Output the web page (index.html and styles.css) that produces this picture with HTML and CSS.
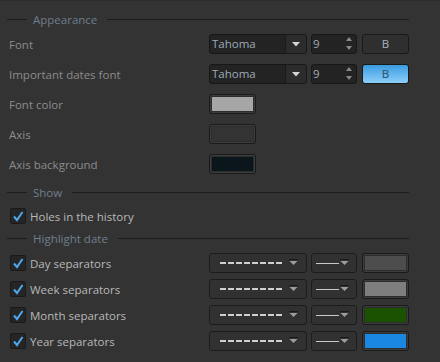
FILE: index.html
```html
<!DOCTYPE html>
<html lang="en">
<head>
    <meta charset="UTF-8">
    <title>Settings</title>
    <link rel="stylesheet" href="styles.css">
</head>
<body>

<div class="panel">
    <div class="group-title first">Appearance</div>

    <div class="rows appearance">
        <div class="row">
            <div class="label">Font</div>
            <div class="combo">
                <span class="combo-text">Tahoma</span>
                <span class="combo-btn"><svg width="8" height="5" viewBox="0 0 8 5"><path d="M0 0H8L4 4.5Z" fill="#d4d4d4"/></svg></span>
            </div>
            <div class="spin">
                <span class="spin-text">9</span>
                <span class="spin-arrows">
                    <svg width="6" height="4" viewBox="0 0 6 4"><path d="M0 4H6L3 0Z" fill="#8a8a8a"/></svg>
                    <svg width="6" height="4" viewBox="0 0 6 4"><path d="M0 0H6L3 4Z" fill="#8a8a8a"/></svg>
                </span>
            </div>
            <div class="btn">B</div>
        </div>

        <div class="row">
            <div class="label">Important dates font</div>
            <div class="combo">
                <span class="combo-text">Tahoma</span>
                <span class="combo-btn"><svg width="8" height="5" viewBox="0 0 8 5"><path d="M0 0H8L4 4.5Z" fill="#d4d4d4"/></svg></span>
            </div>
            <div class="spin">
                <span class="spin-text">9</span>
                <span class="spin-arrows">
                    <svg width="6" height="4" viewBox="0 0 6 4"><path d="M0 4H6L3 0Z" fill="#8a8a8a"/></svg>
                    <svg width="6" height="4" viewBox="0 0 6 4"><path d="M0 0H6L3 4Z" fill="#8a8a8a"/></svg>
                </span>
            </div>
            <div class="btn btn-on">B</div>
        </div>

        <div class="row">
            <div class="label">Font color</div>
            <div class="swatch"><span style="background:#a6a6a6"></span></div>
        </div>

        <div class="row">
            <div class="label">Axis</div>
            <div class="swatch"><span style="background:#333333"></span></div>
        </div>

        <div class="row">
            <div class="label">Axis background</div>
            <div class="swatch"><span style="background:#0b161c"></span></div>
        </div>
    </div>

    <div class="group-title show">Show</div>

    <div class="check-row holes">
        <span class="check"><svg width="14" height="14" viewBox="0 0 14 14"><path d="M3 7.5L6 11L11.5 3" fill="none" stroke="#4ea8ee" stroke-width="2"/></svg></span>
        <span class="check-text">Holes in the history</span>
    </div>

    <div class="group-title highlight">Highlight date</div>

    <div class="rows separators">
        <div class="row">
            <div class="check-row">
                <span class="check"><svg width="14" height="14" viewBox="0 0 14 14"><path d="M3 7.5L6 11L11.5 3" fill="none" stroke="#4ea8ee" stroke-width="2"/></svg></span>
                <span class="check-text">Day separators</span>
            </div>
            <div class="dash-combo"><span class="dashes"></span><svg class="arrow" width="9" height="7" viewBox="0 0 9 7"><path d="M0 0.5H9" stroke="#1a1a1a"/><path d="M0.5 2H8.5L4.5 6Z" fill="#9c9c9c"/></svg></div>
            <div class="line-combo"><span class="solid"></span><svg class="arrow" width="9" height="7" viewBox="0 0 9 7"><path d="M0 0.5H9" stroke="#1a1a1a"/><path d="M0.5 2H8.5L4.5 6Z" fill="#9c9c9c"/></svg></div>
            <div class="swatch"><span style="background:#4d4d4d"></span></div>
        </div>

        <div class="row">
            <div class="check-row">
                <span class="check"><svg width="14" height="14" viewBox="0 0 14 14"><path d="M3 7.5L6 11L11.5 3" fill="none" stroke="#4ea8ee" stroke-width="2"/></svg></span>
                <span class="check-text">Week separators</span>
            </div>
            <div class="dash-combo"><span class="dashes"></span><svg class="arrow" width="9" height="7" viewBox="0 0 9 7"><path d="M0 0.5H9" stroke="#1a1a1a"/><path d="M0.5 2H8.5L4.5 6Z" fill="#9c9c9c"/></svg></div>
            <div class="line-combo"><span class="solid"></span><svg class="arrow" width="9" height="7" viewBox="0 0 9 7"><path d="M0 0.5H9" stroke="#1a1a1a"/><path d="M0.5 2H8.5L4.5 6Z" fill="#9c9c9c"/></svg></div>
            <div class="swatch"><span style="background:#7e7e7e"></span></div>
        </div>

        <div class="row">
            <div class="check-row">
                <span class="check"><svg width="14" height="14" viewBox="0 0 14 14"><path d="M3 7.5L6 11L11.5 3" fill="none" stroke="#4ea8ee" stroke-width="2"/></svg></span>
                <span class="check-text">Month separators</span>
            </div>
            <div class="dash-combo"><span class="dashes"></span><svg class="arrow" width="9" height="7" viewBox="0 0 9 7"><path d="M0 0.5H9" stroke="#1a1a1a"/><path d="M0.5 2H8.5L4.5 6Z" fill="#9c9c9c"/></svg></div>
            <div class="line-combo"><span class="solid"></span><svg class="arrow" width="9" height="7" viewBox="0 0 9 7"><path d="M0 0.5H9" stroke="#1a1a1a"/><path d="M0.5 2H8.5L4.5 6Z" fill="#9c9c9c"/></svg></div>
            <div class="swatch"><span style="background:#1a5200"></span></div>
        </div>

        <div class="row">
            <div class="check-row">
                <span class="check"><svg width="14" height="14" viewBox="0 0 14 14"><path d="M3 7.5L6 11L11.5 3" fill="none" stroke="#4ea8ee" stroke-width="2"/></svg></span>
                <span class="check-text">Year separators</span>
            </div>
            <div class="dash-combo"><span class="dashes"></span><svg class="arrow" width="9" height="7" viewBox="0 0 9 7"><path d="M0 0.5H9" stroke="#1a1a1a"/><path d="M0.5 2H8.5L4.5 6Z" fill="#9c9c9c"/></svg></div>
            <div class="line-combo"><span class="solid"></span><svg class="arrow" width="9" height="7" viewBox="0 0 9 7"><path d="M0 0.5H9" stroke="#1a1a1a"/><path d="M0.5 2H8.5L4.5 6Z" fill="#9c9c9c"/></svg></div>
            <div class="swatch"><span style="background:#1a88e2"></span></div>
        </div>
    </div>
</div>

</body>
</html>
```

FILE: styles.css
```css
body {
    margin: 0;
    background-color: #333333;
    font-family: 'Open Sans', sans-serif;
    font-size: 11.5px;
}
.panel {
    width: 402px;
    height: 361px;
    padding: 0 31px 0 7px;
    border-top: 1px solid #2b2b2b;
}
.group-title {
    display: flex;
    align-items: center;
    height: 18px;
    color: #6f7f8e;
}
.group-title::before {
    content: "";
    width: 20px;
    border-top: 1px solid #1c1c1c;
    margin-right: 6px;
}
.group-title::after {
    content: "";
    flex: 1;
    border-top: 1px solid #1c1c1c;
    margin-left: 10px;
}
.group-title.first {
    padding-top: 9px;
    margin-bottom: 6px;
}
.group-title.show {
    margin-top: 9px;
    margin-bottom: 7px;
}
.group-title.highlight {
    margin-top: 5px;
    margin-bottom: 6px;
}
.rows {
    display: flex;
    flex-direction: column;
}
.appearance {
    gap: 10px;
}
.separators {
    gap: 6px;
}
.row {
    display: flex;
    align-items: center;
    height: 20px;
}
.label {
    width: 200px;
    padding-left: 2px;
    color: #8c8c8c;
}
.combo {
    display: flex;
    width: 96px;
    height: 18px;
    border: 1px solid #171717;
    border-radius: 3px;
    background-color: #232323;
    margin-right: 4px;
}
.combo-text {
    flex: 1;
    padding-left: 2px;
    line-height: 18px;
    color: #9eabb8;
}
.combo-btn {
    width: 20px;
    border-left: 1px solid #1a1a1a;
    background-color: #2c2c2c;
    border-radius: 0 2px 2px 0;
    display: flex;
    align-items: center;
    justify-content: center;
}
.spin {
    display: flex;
    width: 44px;
    height: 18px;
    border: 1px solid #171717;
    border-radius: 3px;
    background-color: #232323;
    margin-right: 5px;
}
.spin-text {
    flex: 1;
    padding-left: 1px;
    line-height: 17px;
    color: #9eabb8;
}
.spin-arrows {
    width: 14px;
    display: flex;
    flex-direction: column;
    justify-content: space-between;
    align-items: center;
    padding: 2px 0 3px;
}
.spin-arrows svg {
    display: block;
}
.btn {
    width: 45px;
    height: 18px;
    border: 1px solid #1a1a1a;
    border-radius: 3px;
    background-color: #2f2f2f;
    color: #a8b4c0;
    text-align: center;
    line-height: 18px;
}
.btn-on {
    background: linear-gradient(#3a9be0, #8ccffa);
    color: #2a4a66;
}
.swatch {
    width: 41px;
    height: 14px;
    padding: 2px;
    border: 1px solid #1a1a1a;
    border-radius: 3px;
    background-color: #2d2d2d;
    box-shadow: inset 0 0 0 1px #3d3d3d;
}
.swatch span {
    display: block;
    width: 100%;
    height: 100%;
}
.check-row {
    display: flex;
    align-items: center;
    height: 16px;
    padding-left: 3px;
}
.holes {
    margin-bottom: 5px;
}
.check {
    width: 14px;
    height: 14px;
    border: 1px solid #1a1a1a;
    border-radius: 2px;
    background-color: #252525;
    margin-right: 4px;
}
.check svg {
    display: block;
}
.check-text {
    color: #b8b8b8;
}
.separators .check-row {
    width: 199px;
}
.dash-combo, .line-combo {
    display: flex;
    align-items: center;
    height: 18px;
    border: 1px solid #1c1c1c;
    border-radius: 3px;
    background-color: #313131;
}
.dash-combo {
    width: 96px;
    margin-right: 4px;
}
.line-combo {
    width: 44px;
    margin-right: 5px;
}
.dashes {
    width: 62px;
    height: 2px;
    margin-left: 10px;
    background: repeating-linear-gradient(90deg, #cfcfcf 0 6px, transparent 6px 8px);
}
.solid {
    width: 23px;
    height: 1px;
    margin-left: 4px;
    background-color: #c8c8c8;
}
.arrow {
    margin-left: auto;
    margin-right: 8px;
    margin-bottom: 1px;
}
.line-combo .arrow {
    margin-right: 7px;
}
```
